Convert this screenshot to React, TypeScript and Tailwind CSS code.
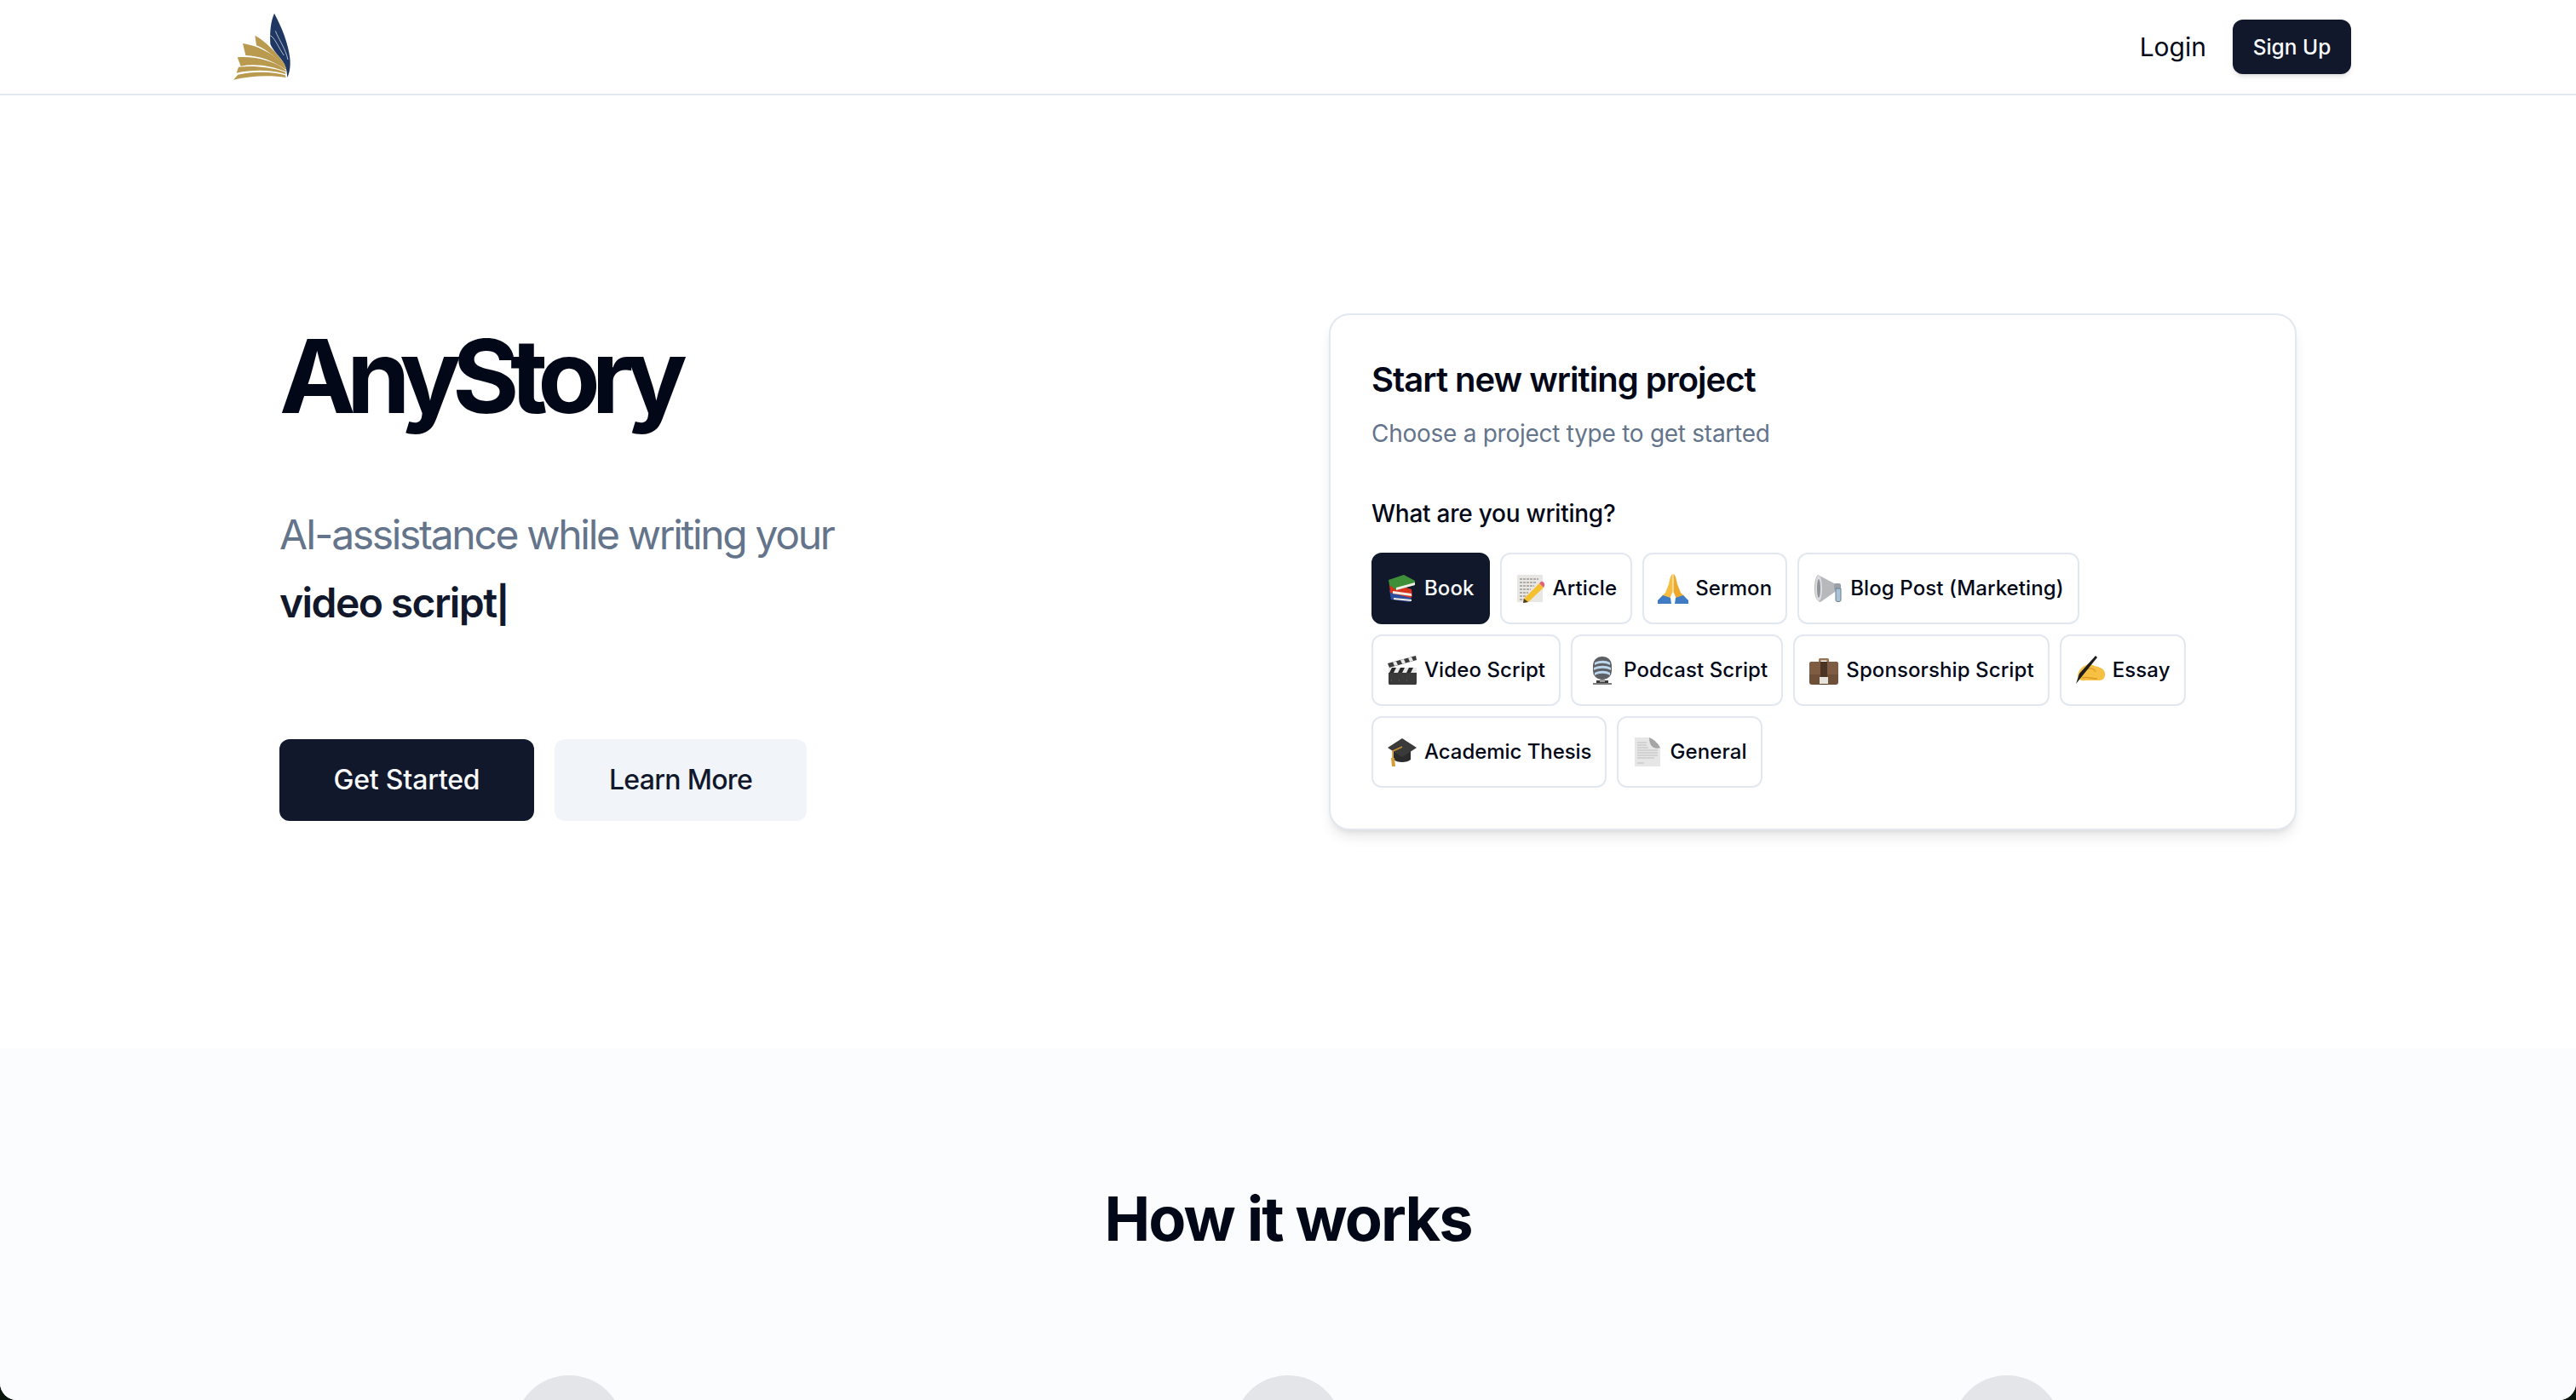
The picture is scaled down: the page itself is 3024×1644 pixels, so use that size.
import React from 'react';

const Logo = () => (
  <svg width="69" height="80" viewBox="100 40 205 240">
    <g fill="#b99a4e">
      <path d="M102 276 L118 258 C170 246 240 246 284 260 L287 268 C230 258 160 262 102 276Z" />
      <path d="M113 252 L120 231 C175 226 240 232 285 250 L286 256 C230 240 170 240 113 252Z" />
      <path d="M116 197 C175 192 245 208 287 243 L287 248 C240 228 180 218 128 228Z" />
      <path d="M135 148 C200 158 260 195 288 236 L286 240 C240 208 195 192 145 190Z" />
      <path d="M178 120 C215 140 250 175 288 228 L286 232 C255 200 220 170 183 155Z" />
    </g>
    <path d="M246 42 C234 70 230 100 232 150 C240 172 268 195 283 222 C290 240 291 255 292 268 C300 250 304 230 301 200 C296 150 272 90 246 42Z" fill="#1f3763" />
    <path d="M232 120 C248 128 262 165 280 190 M250 104 C262 135 285 165 294 205" fill="none" stroke="#ffffff" strokeWidth="2" />
  </svg>
);

const Books = () => (
  <svg width="36" height="36" viewBox="0 0 36 36">
    <path d="M3 20 L5 31 L27 34 L29 32 L28 24 Z" fill="#2b4ea0" />
    <path d="M3 14 L4 23 L28 29 L30 27 L29 19 L7 12 Z" fill="#d8321f" />
    <path d="M8 29 L29 31 L29 33 L8 31 Z" fill="#f3ece0" />
    <path d="M7 21 L29 24 L29 27 L7 24 Z" fill="#f3ece0" />
    <path d="M2 8 L20 2 L33 9 L33 14 L11 20 L3 14 Z" fill="#3f8f38" />
    <path d="M11 17 L33 11 L33 14 L11 20 Z" fill="#f1efe6" />
  </svg>
);

const Memo = () => (
  <svg width="36" height="36" viewBox="0 0 36 36">
    <rect x="2" y="2" width="30" height="32" fill="#e9e7e3" />
    <path d="M5 7h22M5 11h20M5 15h17M5 19h13M5 23h10M5 27h9M5 31h8" stroke="#77736d" strokeWidth="1" strokeDasharray="3 1" />
    <path d="M10 30 L28 12 L33 17 L15 34 L9 35 Z" fill="#f4c02f" />
    <path d="M28 12 L30 10 C32 9 35 12 34 15 L33 17 Z" fill="#e0607a" />
    <path d="M10 30 L15 34 L9 35 Z" fill="#4a3f33" />
  </svg>
);

const Pray = () => (
  <svg width="36" height="36" viewBox="0 0 36 36">
    <path d="M17.5 1 C15 2 14 8 13 13 L9 23 L4 28 L14 30 L17.5 22 Z" fill="#f6bd41" />
    <path d="M18.5 1 C21 2 22 8 23 13 L27 23 L32 28 L22 30 L18.5 22 Z" fill="#eea92c" />
    <path d="M0 36 L0 32 L6 26 L15 29 L16 36 Z" fill="#3f7cc4" />
    <path d="M36 36 L36 32 L30 26 L21 29 L20 36 Z" fill="#3f7cc4" />
  </svg>
);

const Megaphone = () => (
  <svg width="36" height="36" viewBox="0 0 36 36">
    <path d="M6 2 C2 6 1 18 3 27 C4 31 7 34 9 34 L29 20 L27 13 Z" fill="#b6b8bb" />
    <ellipse cx="7" cy="18" rx="4" ry="15" fill="#dcdde0" />
    <ellipse cx="7" cy="18" rx="2" ry="11" fill="#8f9296" />
    <rect x="25" y="12" width="8" height="7" rx="2" fill="#9aa1a8" />
    <path d="M27 18 h6 v14 c0 2 -6 2 -6 0 Z" fill="#a8c3d8" stroke="#6a7c8a" strokeWidth="1" />
  </svg>
);

const Clapper = () => (
  <svg width="36" height="36" viewBox="0 0 36 36">
    <path d="M1 10 L34 1 L35 6 L3 15 Z" fill="#3b3b3b" />
    <path d="M7 8.5 L11 7.5 L13 12 L9 13 Z M16 6 L20 5 L22 9.5 L18 10.5 Z M25 3.5 L29 2.5 L31 7 L27 8 Z" fill="#e9e9e9" />
    <rect x="2" y="15" width="33" height="6" fill="#e9e9e9" />
    <path d="M6 15h5l-3 6h-5zM16 15h5l-3 6h-5zM26 15h5l-3 6h-5z" fill="#2a2a2a" />
    <path d="M2 21 H35 V33 C35 35 34 35 33 35 H4 C3 35 2 35 2 33 Z" fill="#3a3a3a" />
    <path d="M5 30h27" stroke="#6a6a6a" strokeWidth="1" strokeDasharray="1 8" />
  </svg>
);

const Mic = () => (
  <svg width="36" height="36" viewBox="0 0 36 36">
    <rect x="12" y="30" width="14" height="3" fill="#3a3a3a" />
    <rect x="8" y="33" width="22" height="2" fill="#7d7d7d" />
    <rect x="8" y="2" width="22" height="27" rx="10" fill="#5d6166" />
    <path d="M10 9 C16 6 23 6 28 9 V12 C22 9 16 9 10 12Z M9 15 C16 12 23 12 29 15 V18 C23 15 16 15 9 18Z M10 21 C16 18 23 18 28 21 V24 C22 21 16 21 10 24Z" fill="#bcd7ec" />
    <path d="M16 29 h6 v3 h-6 Z" fill="#9c9c9c" />
  </svg>
);

const Briefcase = () => (
  <svg width="36" height="36" viewBox="0 0 36 36">
    <path d="M12 9 V6 C12 4 13 4 15 4 H21 C23 4 24 4 24 6 V9 H21.5 V6.5 H14.5 V9 Z" fill="#9a7453" />
    <rect x="1" y="8" width="34" height="27" rx="3" fill="#6e4f38" />
    <path d="M1 11 C1 9 2 8 4 8 H32 C34 8 35 9 35 11 V23 H1 Z" fill="#7d5c43" />
    <rect x="14" y="8" width="8" height="27" fill="#4b3424" />
    <rect x="13" y="26" width="10" height="8" fill="#e6e3dd" />
  </svg>
);

const Writing = () => (
  <svg width="36" height="36" viewBox="0 0 36 36">
    <path d="M3 26 C3 20 7 14 13 12 L16 10 L23 13 C28 14 34 16 35 21 C36 26 33 30 29 30 H12 C8 31 5 30 3 26Z" fill="#f6c142" />
    <path d="M14 17 C18 15 22 16 24 20 M8 27 C14 25 20 28 26 28" fill="none" stroke="#dd9a28" strokeWidth="1.5" />
    <path d="M24 1 L26 3 L9 24 L1 34 L5 22 Z" fill="#1d1d1d" />
  </svg>
);

const GradCap = () => (
  <svg width="36" height="36" viewBox="0 0 36 36">
    <path d="M8 17 V27 C12 31 24 31 28 27 V17 Z" fill="#2b2b2b" />
    <path d="M18 2 L35 13 L18 24 L1 13 Z" fill="#3a3a3a" />
    <path d="M18 12 L7 17 V25" fill="none" stroke="#c9932f" strokeWidth="1.6" />
    <path d="M5 25 H9 L10 35 H6 Z" fill="#d49f38" />
  </svg>
);

const Doc = () => (
  <svg width="36" height="36" viewBox="0 0 36 36">
    <path d="M3 1 H20 C22 7 26 11 33 13 V35 H3 Z" fill="#e6e6e6" />
    <path d="M20 1 C27 4 31 9 33 13 C27 15 20 13 20 1Z" fill="#a5a5a5" />
    <path d="M6 7h11M6 10h11M6 13h13M6 16h24M6 19h24M6 22h24M6 25h20M6 31h8" stroke="#bdbdbd" strokeWidth="1" />
  </svg>
);

const projectTypes = [
  { label: 'Book', icon: <Books />, active: true },
  { label: 'Article', icon: <Memo /> },
  { label: 'Sermon', icon: <Pray /> },
  { label: 'Blog Post (Marketing)', icon: <Megaphone /> },
  { label: 'Video Script', icon: <Clapper /> },
  { label: 'Podcast Script', icon: <Mic /> },
  { label: 'Sponsorship Script', icon: <Briefcase /> },
  { label: 'Essay', icon: <Writing /> },
  { label: 'Academic Thesis', icon: <GradCap />, tight: true },
  { label: 'General', icon: <Doc /> },
];

export default function App() {
  return (
    <div className="bg-[#0b160c]">
      <div className="h-[1644px] overflow-hidden rounded-b-[20px] bg-white text-[#020817] [font-family:Inter,sans-serif]">
        <header className="h-[112px] border-b-2 border-[#e2e8f0]">
          <div className="mx-auto flex h-full w-[2496px] items-center justify-between pl-[9px]">
            <Logo />
            <div className="flex items-center gap-[31px]">
              <span className="text-[30px] leading-[48px]">Login</span>
              <button className="h-[64px] w-[139px] rounded-[12px] bg-[#12182b] text-[24.5px] font-medium text-[#f8fafc] shadow-md">
                Sign Up
              </button>
            </div>
          </div>
        </header>

        <section className="py-[256px]">
          <div className="mx-auto grid w-[2368px] grid-cols-2 items-center gap-[96px]">
            <div className="pb-[2px]">
              <h1 className="mt-[4px] text-[120px] leading-[120px] font-bold tracking-[-10.5px]">AnyStory</h1>
              <p className="mt-[86px] text-[48px] leading-[80px] tracking-[-2.32px] text-[#64748b]">AI-assistance while writing your</p>
              <p className="text-[48px] leading-[80px] font-semibold tracking-[-1.6px] text-[#12182b]">
                video script<span className="text-[42px] font-bold">|</span>
              </p>
              <div className="mt-[118px] flex gap-[24px]">
                <button className="h-[96px] w-[299px] rounded-[12px] bg-[#12182b] text-[32px] font-medium tracking-[-0.2px] text-[#f8fafc]">
                  Get Started
                </button>
                <button className="h-[96px] w-[296px] rounded-[12px] bg-[#f1f5f9] text-[32px] font-medium tracking-[-0.7px] text-[#12182b]">
                  Learn More
                </button>
              </div>
            </div>

            <div className="rounded-[24px] border-2 border-[#e2e8f0] bg-white p-[48px] shadow-lg">
              <h2 className="text-[40px] leading-[56px] font-semibold tracking-[-1px]">Start new writing project</h2>
              <p className="mt-[15px] text-[28px] leading-[40px] tracking-[-0.27px] text-[#64748b]">Choose a project type to get started</p>
              <p className="mt-[54px] text-[28px] leading-[40px] font-medium tracking-[-0.25px]">What are you writing?</p>
              <div className="mt-[26px] flex flex-wrap gap-[12px]">
                {projectTypes.map(t => (
                  <button
                    key={t.label}
                    className={
                      t.active
                        ? 'flex h-[84px] items-center gap-[8px] rounded-[12px] border-2 border-[#12182b] bg-[#12182b] px-[16px] text-[24px] font-medium tracking-[0.1px] text-[#f8fafc]'
                        : t.tight
                          ? 'flex h-[84px] items-center gap-[8px] rounded-[12px] border-2 border-[#e2e8f0] bg-white px-[16px] text-[24px] font-medium tracking-[-0.05px]'
                          : 'flex h-[84px] items-center gap-[8px] rounded-[12px] border-2 border-[#e2e8f0] bg-white px-[16px] text-[24px] font-medium tracking-[0.1px]'
                    }
                  >
                    {t.icon}
                    <span>{t.label}</span>
                  </button>
                ))}
              </div>
            </div>
          </div>
        </section>

        <section className="bg-[#fbfcfe] pt-[160px]">
          <h2 className="text-center text-[72px] leading-[80px] font-bold tracking-[-2px]">How it works</h2>
          <div className="mx-auto mt-[144px] grid w-[2467px] grid-cols-3 gap-[64px]">
            {[1, 2, 3].map(n => (
              <div key={n} className="flex justify-center">
                <div className="h-[128px] w-[128px] rounded-full bg-[#e4e5e8]" />
              </div>
            ))}
          </div>
        </section>
      </div>
    </div>
  );
}
